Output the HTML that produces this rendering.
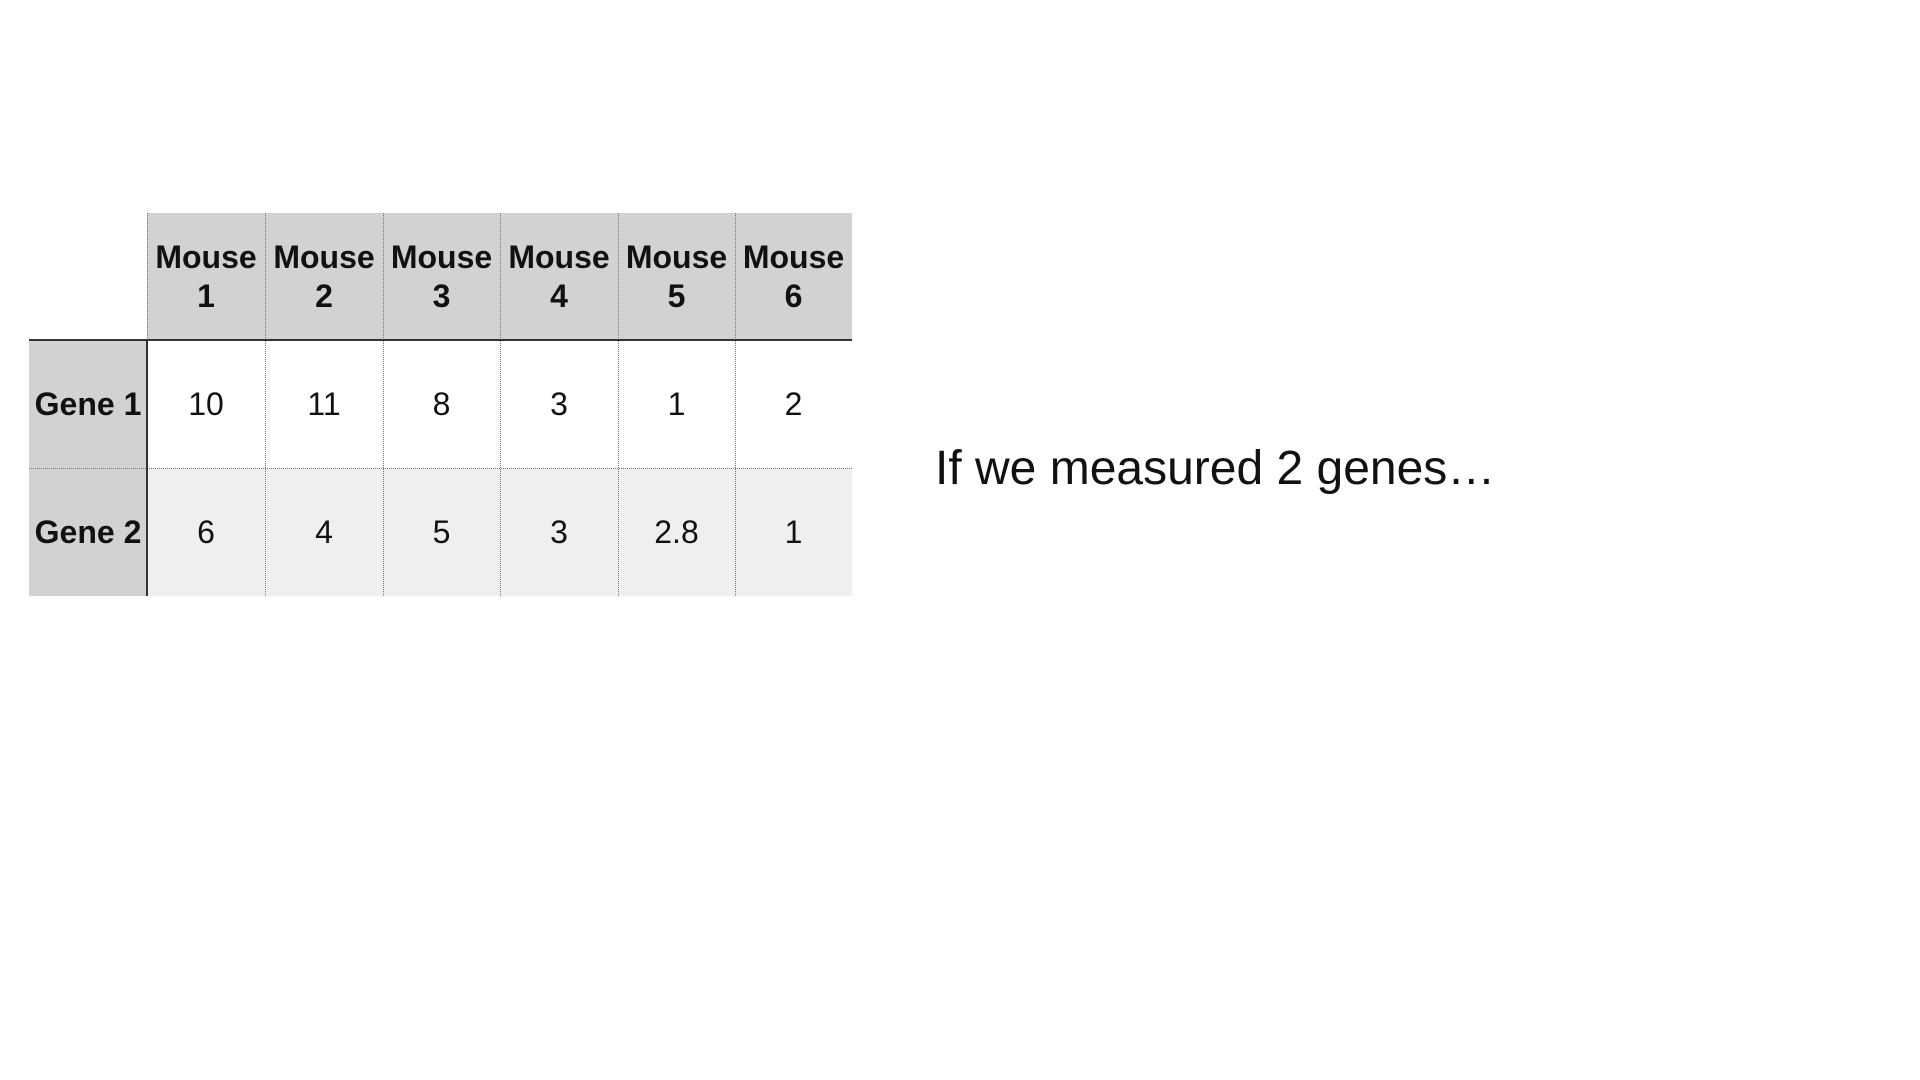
<!DOCTYPE html>
<html><head><meta charset="utf-8"><style>
body{margin:0;width:1920px;height:1080px;background:#fff;position:relative;overflow:hidden;font-family:"Liberation Sans",sans-serif;}
.c{position:absolute;display:flex;align-items:center;justify-content:center;text-align:center;box-sizing:border-box;font-size:32px;color:#111;line-height:39px;}
.h{background:#d2d2d2;font-weight:bold;}
.r1{background:#fff;}
.r2{background:#efefef;}
.l{background:#d2d2d2;font-weight:bold;}
.vd{position:absolute;width:0;border-left:1px dotted #777;}
.hd{position:absolute;height:0;border-top:1px dotted #777;}
.txt{position:absolute;left:935px;top:441px;font-size:48px;color:#111;white-space:nowrap;}
</style></head><body>
<div class="c h" style="left:147px;top:213px;width:118px;height:127px">Mouse<br>1</div>
<div class="c h" style="left:265px;top:213px;width:118px;height:127px">Mouse<br>2</div>
<div class="c h" style="left:383px;top:213px;width:117px;height:127px">Mouse<br>3</div>
<div class="c h" style="left:500px;top:213px;width:118px;height:127px">Mouse<br>4</div>
<div class="c h" style="left:618px;top:213px;width:117px;height:127px">Mouse<br>5</div>
<div class="c h" style="left:735px;top:213px;width:117px;height:127px">Mouse<br>6</div>

<div class="c l" style="left:29px;top:340px;width:118px;height:128px">Gene 1</div>
<div class="c r1" style="left:147px;top:340px;width:118px;height:128px">10</div>
<div class="c r1" style="left:265px;top:340px;width:118px;height:128px">11</div>
<div class="c r1" style="left:383px;top:340px;width:117px;height:128px">8</div>
<div class="c r1" style="left:500px;top:340px;width:118px;height:128px">3</div>
<div class="c r1" style="left:618px;top:340px;width:117px;height:128px">1</div>
<div class="c r1" style="left:735px;top:340px;width:117px;height:128px">2</div>

<div class="c l" style="left:29px;top:468px;width:118px;height:128px">Gene 2</div>
<div class="c r2" style="left:147px;top:468px;width:118px;height:128px">6</div>
<div class="c r2" style="left:265px;top:468px;width:118px;height:128px">4</div>
<div class="c r2" style="left:383px;top:468px;width:117px;height:128px">5</div>
<div class="c r2" style="left:500px;top:468px;width:118px;height:128px">3</div>
<div class="c r2" style="left:618px;top:468px;width:117px;height:128px">2.8</div>
<div class="c r2" style="left:735px;top:468px;width:117px;height:128px">1</div>

<div class="vd" style="left:147px;top:213px;height:127px"></div>
<div class="vd" style="left:265px;top:213px;height:383px"></div>
<div class="vd" style="left:383px;top:213px;height:383px"></div>
<div class="vd" style="left:500px;top:213px;height:383px"></div>
<div class="vd" style="left:618px;top:213px;height:383px"></div>
<div class="vd" style="left:735px;top:213px;height:383px"></div>
<div class="hd" style="left:29px;top:468px;width:823px"></div>
<div style="position:absolute;left:29px;top:339px;width:823px;height:2px;background:#333"></div>
<div style="position:absolute;left:146px;top:340px;width:2px;height:256px;background:#333"></div>

<div class="txt">If we measured 2 genes…</div>
</body></html>
